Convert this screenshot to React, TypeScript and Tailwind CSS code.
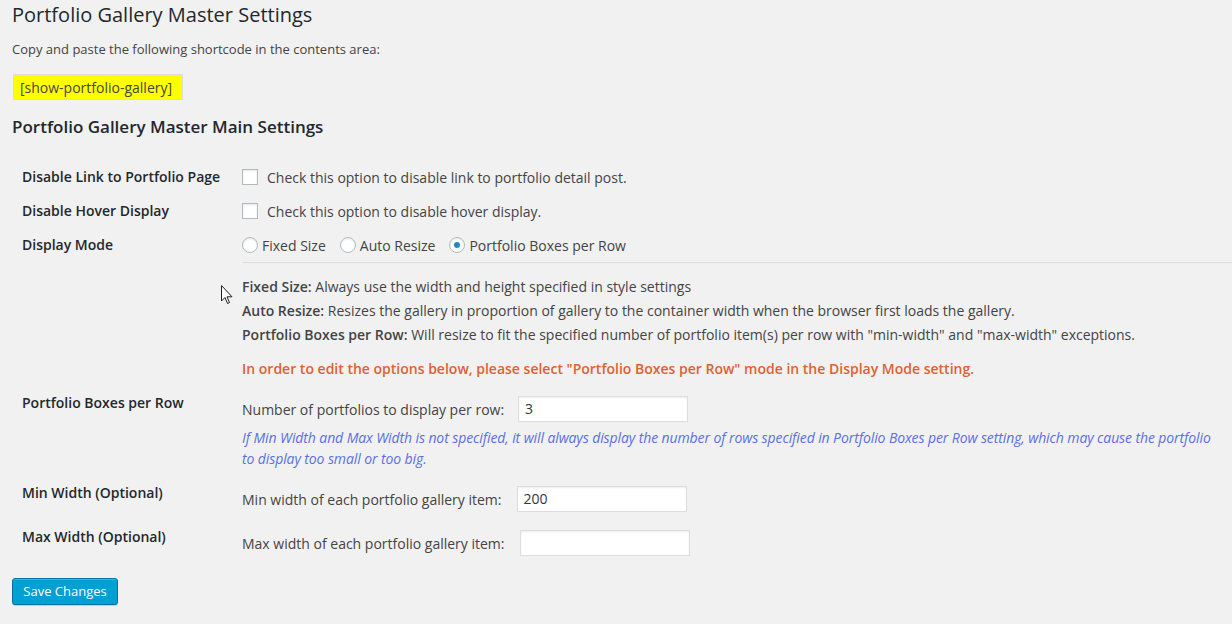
import React from "react";

const font = { fontFamily: '"Open Sans", "Noto Sans", sans-serif' };

function Checkbox() {
  return (
    <span className="inline-block w-[16px] h-[16px] bg-white border border-[#b4b9be] shadow-[inset_0_1px_2px_rgba(0,0,0,0.1)] shrink-0" />
  );
}

function Radio({ checked }: { checked?: boolean }) {
  return (
    <span className="inline-flex items-center justify-center w-[16px] h-[16px] rounded-full bg-white border border-[#b4b9be] shadow-[inset_0_1px_2px_rgba(0,0,0,0.1)] shrink-0">
      {checked && <span className="block w-[6px] h-[6px] rounded-full bg-[#1e8cbe]" />}
    </span>
  );
}

function Label({ children, top }: { children: React.ReactNode; top?: boolean }) {
  return (
    <div
      className={
        "w-[230px] pl-[10px] text-[14px] leading-[20px] font-semibold text-[#23282d] shrink-0 " +
        (top ? "pt-[2px]" : "")
      }
    >
      {children}
    </div>
  );
}

function Input({ value, ml }: { value?: string; ml: string }) {
  return (
    <div
      className={
        "w-[170px] h-[26px] bg-white border border-[#dddddd] shadow-[inset_0_1px_2px_rgba(0,0,0,0.07)] text-[14px] leading-[24px] pl-[6px] text-[#32373c] " +
        ml
      }
    >
      {value}
    </div>
  );
}

export default function App() {
  return (
    <div className="relative min-h-[624px] w-full bg-[#f1f1f1] text-[#444444] overflow-hidden" style={font}>
      <div className="pl-[12px]">
        <h2 className="pt-[1px] text-[20px] leading-[28px] font-normal text-[#23282d]">
          Portfolio Gallery Master Settings
        </h2>
        <p className="mt-[10px] text-[13px] leading-[20px] text-[#444]">
          Copy and paste the following shortcode in the contents area:
        </p>
        <div className="mt-[15px] inline-flex items-center h-[26px] w-[170px] ml-[1px] bg-[#ffff00] border border-[#dddddd] pl-[6px] text-[14px] text-[#444]">
          [show-portfolio-gallery]
        </div>
        <h3 className="mt-[16px] text-[17px] leading-[22px] font-semibold text-[#23282d]">
          Portfolio Gallery Master Main Settings
        </h3>

        <div className="mt-[22px]">
          <div className="flex items-center h-[34px]">
            <Label>Disable Link to Portfolio Page</Label>
            <Checkbox />
            <span className="ml-[9px] text-[14px] text-[#444]">
              Check this option to disable link to portfolio detail post.
            </span>
          </div>
          <div className="flex items-center h-[34px]">
            <Label>Disable Hover Display</Label>
            <Checkbox />
            <span className="ml-[9px] text-[14px] text-[#444]">
              Check this option to disable hover display.
            </span>
          </div>
          <div className="flex items-center h-[34px]">
            <Label>Display Mode</Label>
            <Radio />
            <span className="ml-[4px] mr-[14px] text-[14px] text-[#444]">Fixed Size</span>
            <Radio />
            <span className="ml-[4px] mr-[14px] text-[14px] text-[#444]">Auto Resize</span>
            <Radio checked />
            <span className="ml-[4px] text-[14px] text-[#444]">Portfolio Boxes per Row</span>
          </div>
          <div className="ml-[230px] border-t border-[#dddddd]" />

          <div className="ml-[230px] pt-[12px] text-[14px] leading-[24px] text-[#444]">
            <div>
              <b className="font-semibold">Fixed Size:</b> Always use the width and height specified in style settings
            </div>
            <div>
              <b className="font-semibold">Auto Resize:</b> Resizes the gallery in proportion of gallery to the container width when the browser first loads the gallery.
            </div>
            <div>
              <b className="font-semibold">Portfolio Boxes per Row:</b> Will resize to fit the specified number of portfolio item(s) per row with "min-width" and "max-width" exceptions.
            </div>
            <div className="mt-[10px] font-semibold text-[#dd6232]">
              In order to edit the options below, please select "Portfolio Boxes per Row" mode in the Display Mode setting.
            </div>
          </div>

          <div className="flex items-start mt-[10px]">
            <Label top>Portfolio Boxes per Row</Label>
            <div className="pt-[5px] flex-1">
              <div className="flex items-center">
                <span className="text-[14px] text-[#444]">Number of portfolios to display per row:</span>
                <Input value="3" ml="ml-[14px]" />
              </div>
              <div className="mt-[5px] pr-[18px] text-[14px] leading-[21px] italic tracking-[-0.1px] text-[#5c6fe3]">
                If Min Width and Max Width is not specified, it will always display the number of rows specified in Portfolio Boxes per Row setting, which may cause the portfolio to display too small or too big.
              </div>
            </div>
          </div>

          <div className="flex items-start mt-[12px]">
            <Label top>Min Width (Optional)</Label>
            <div className="pt-[5px] flex items-center">
              <span className="text-[14px] text-[#444]">Min width of each portfolio gallery item:</span>
              <Input value="200" ml="ml-[15px]" />
            </div>
          </div>

          <div className="flex items-start mt-[13px]">
            <Label top>Max Width (Optional)</Label>
            <div className="pt-[5px] flex items-center">
              <span className="text-[14px] text-[#444]">Max width of each portfolio gallery item:</span>
              <Input ml="ml-[15px]" />
            </div>
          </div>
        </div>

        <button className="mt-[22px] h-[27px] w-[106px] rounded-[3px] bg-[#00a0d2] border border-[#0073aa] text-white text-[13px] leading-[25px] shadow-[inset_0_1px_0_rgba(120,200,230,0.5),0_1px_0_rgba(0,0,0,0.15)]">
          Save Changes
        </button>
      </div>

      <svg
        className="absolute left-[221px] top-[285px]"
        width="13"
        height="20"
        viewBox="0 0 13 20"
      >
        <path
          d="M0.5 0.5 L0.5 16 L4 12.5 L6.5 18.5 L8.5 17.6 L6 11.8 L11 11.8 Z"
          fill="#ffffff"
          stroke="#222"
          strokeWidth="1"
          strokeLinejoin="round"
        />
      </svg>
    </div>
  );
}
